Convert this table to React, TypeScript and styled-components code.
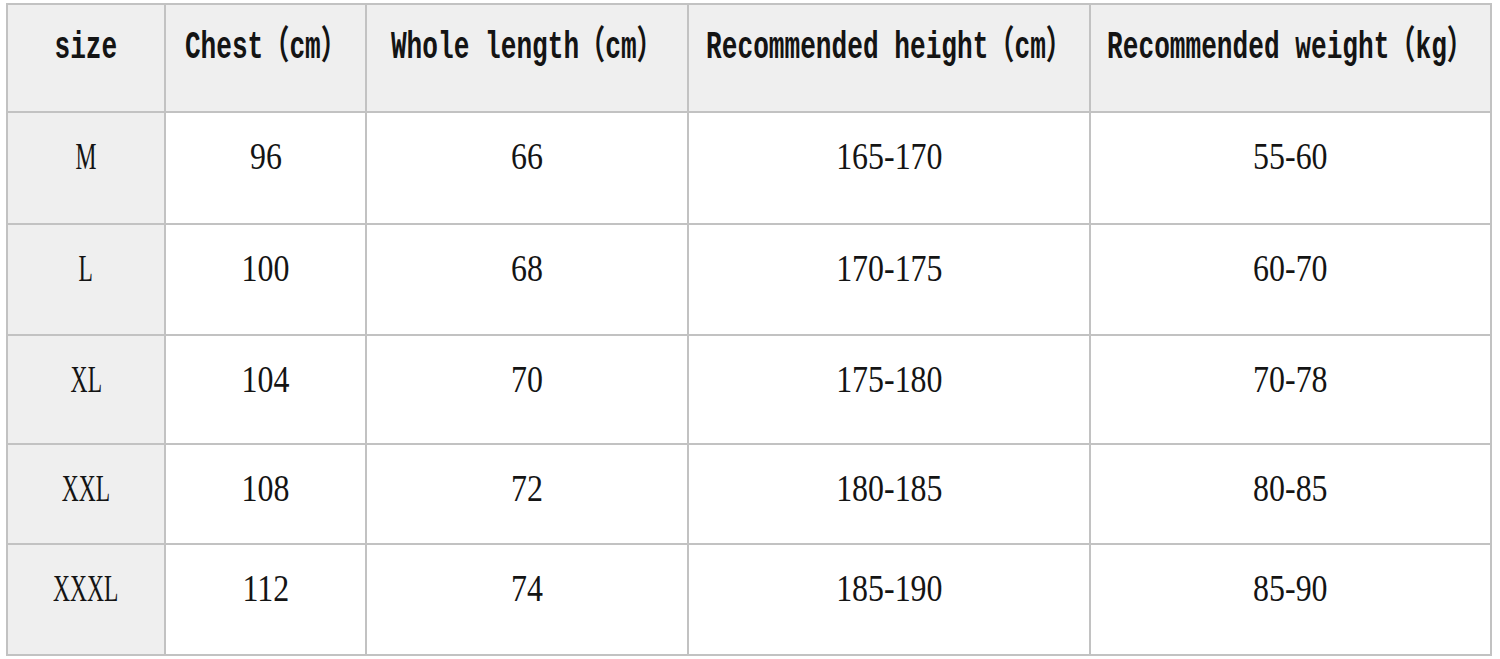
import React from 'react';
import styled, { createGlobalStyle } from 'styled-components';

const GlobalStyle = createGlobalStyle`
  html, body {
    margin: 0;
    padding: 0;
    background: #ffffff;
  }
`;

const headers = [
  'size',
  'Chest（cm）',
  'Whole length（cm）',
  'Recommended height（cm）',
  'Recommended weight（kg）',
];

const rows = [
  ['M', '96', '66', '165-170', '55-60'],
  ['L', '100', '68', '170-175', '60-70'],
  ['XL', '104', '70', '175-180', '70-78'],
  ['XXL', '108', '72', '180-185', '80-85'],
  ['XXXL', '112', '74', '185-190', '85-90'],
];

const Page = styled.div`
  padding: 3px 0 0 6px;
`;

const Table = styled.div`
  display: grid;
  grid-template-columns: 156px 199px 320px 400px 399px;
  grid-template-rows: 106px 110px 109px 107px 98px 109px;
  gap: 2px;
  padding: 2px;
  width: 1482px;
  background: #c2c2c2;
`;

const Cell = styled.div<{ $shaded: boolean }>`
  display: flex;
  justify-content: center;
  align-items: flex-start;
  padding-top: 18px;
  background: ${props => (props.$shaded ? '#efefef' : '#ffffff')};
  overflow: hidden;
`;

// half-width monospaced look of the original header labels
const HeadText = styled.span`
  display: inline-block;
  font-family: 'Liberation Mono', 'Noto Sans CJK SC', monospace;
  font-weight: bold;
  font-size: 39px;
  line-height: 50px;
  color: #141414;
  white-space: pre;
  transform: scaleX(0.67);
`;

const BodyText = styled.span<{ $squeeze: number }>`
  display: inline-block;
  font-family: 'Liberation Serif', serif;
  font-size: 38px;
  line-height: 50px;
  color: #141414;
  white-space: pre;
  transform: scaleX(${props => props.$squeeze});
`;

export default function App() {
  return (
    <Page>
      <GlobalStyle />
      <Table>
        {headers.map(h => (
          <Cell key={h} $shaded>
            <HeadText>{h}</HeadText>
          </Cell>
        ))}
        {rows.map(row =>
          row.map((value, i) => (
            <Cell key={row[0] + i} $shaded={i === 0}>
              <BodyText $squeeze={i === 0 ? 0.62 : 0.84}>{value}</BodyText>
            </Cell>
          ))
        )}
      </Table>
    </Page>
  );
}
